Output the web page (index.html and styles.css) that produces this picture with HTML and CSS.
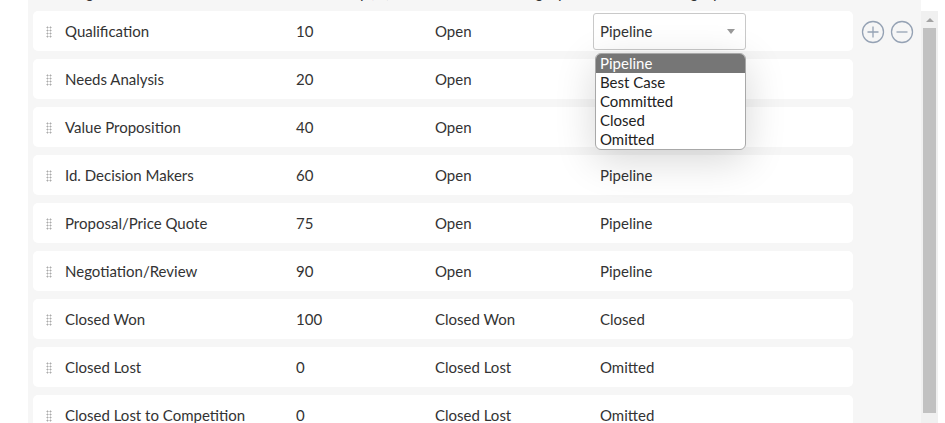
FILE: index.html
```html
<!DOCTYPE html>
<html lang="en">
<head>
    <meta charset="UTF-8">
    <meta name="viewport" content="width=device-width, initial-scale=1.0">
    <title>Opportunity Stages</title>
    <link rel="stylesheet" href="styles.css">
</head>
<body>

    <div class="page">
        <div class="strip"></div>

        <div class="panel">
            <div class="list">
                <div class="head">
                    <span class="name">Stage Name</span>
                    <span class="prob">Probability (%)</span>
                    <span class="status">Won/Lost Category</span>
                    <span class="cat">Forecast Category</span>
                </div>

                <div class="row">
                    <span class="handle"></span>
                    <span class="name">Qualification</span>
                    <span class="prob">10</span>
                    <span class="status">Open</span>
                    <div class="cat picker">
                        <div class="select">Pipeline <span class="caret"></span></div>
                        <ul class="options">
                            <li class="selected">Pipeline</li>
                            <li>Best Case</li>
                            <li>Committed</li>
                            <li>Closed</li>
                            <li>Omitted</li>
                        </ul>
                    </div>
                </div>
                <div class="row">
                    <span class="handle"></span>
                    <span class="name">Needs Analysis</span>
                    <span class="prob">20</span>
                    <span class="status">Open</span>
                    <span class="cat"></span>
                </div>
                <div class="row">
                    <span class="handle"></span>
                    <span class="name">Value Proposition</span>
                    <span class="prob">40</span>
                    <span class="status">Open</span>
                    <span class="cat"></span>
                </div>
                <div class="row">
                    <span class="handle"></span>
                    <span class="name">Id. Decision Makers</span>
                    <span class="prob">60</span>
                    <span class="status">Open</span>
                    <span class="cat">Pipeline</span>
                </div>
                <div class="row">
                    <span class="handle"></span>
                    <span class="name">Proposal/Price Quote</span>
                    <span class="prob">75</span>
                    <span class="status">Open</span>
                    <span class="cat">Pipeline</span>
                </div>
                <div class="row">
                    <span class="handle"></span>
                    <span class="name">Negotiation/Review</span>
                    <span class="prob">90</span>
                    <span class="status">Open</span>
                    <span class="cat">Pipeline</span>
                </div>
                <div class="row">
                    <span class="handle"></span>
                    <span class="name">Closed Won</span>
                    <span class="prob">100</span>
                    <span class="status">Closed Won</span>
                    <span class="cat">Closed</span>
                </div>
                <div class="row">
                    <span class="handle"></span>
                    <span class="name">Closed Lost</span>
                    <span class="prob">0</span>
                    <span class="status">Closed Lost</span>
                    <span class="cat">Omitted</span>
                </div>
                <div class="row">
                    <span class="handle"></span>
                    <span class="name">Closed Lost to Competition</span>
                    <span class="prob">0</span>
                    <span class="status">Closed Lost</span>
                    <span class="cat">Omitted</span>
                </div>
            </div>

            <div class="actions">
                <svg class="icon" width="24" height="24" viewBox="0 0 24 24">
                    <circle cx="12" cy="12" r="10.5"/>
                    <path d="M12 6.5v11M6.5 12h11"/>
                </svg>
                <svg class="icon" width="24" height="24" viewBox="0 0 24 24">
                    <circle cx="12" cy="12" r="10.5"/>
                    <path d="M6.5 12h11"/>
                </svg>
            </div>
        </div>

        <div class="scrollbar">
            <div class="arrow"></div>
            <div class="thumb"></div>
        </div>
        <div class="edge"></div>
    </div>

</body>
</html>
```

FILE: styles.css
```css
* { box-sizing: border-box; margin: 0; padding: 0; }
body { font-family: Lato, "Open Sans", sans-serif; font-size: 15px; color: #333; background: #fff; overflow: hidden; }

.page { display: flex; height: 423px; overflow: hidden; }
.strip { width: 28px; flex: none; }
.edge { width: 7px; flex: none; }

.panel {
    flex: 1;
    display: flex;
    align-items: flex-start;
    background: #f6f6f6;
    padding-left: 5px;
}

.list { width: 820px; flex: none; }

.head {
    display: flex;
    height: 18px;
    line-height: 18px;
    margin-top: -17px;
    margin-bottom: 10px;
    padding-left: 32px;
}

.row {
    display: flex;
    align-items: center;
    height: 40px;
    margin-bottom: 8px;
    padding-left: 13px;
    background: #fff;
    border-radius: 5px;
}

.handle {
    width: 6px;
    height: 12px;
    margin-right: 13px;
    margin-top: 1px;
    background-image: radial-gradient(circle, #aaa 0.9px, transparent 1.1px);
    background-size: 3px 3px;
    flex: none;
}

.name { width: 231px; flex: none; }
.prob { width: 139px; flex: none; }
.status { width: 158px; flex: none; }
.cat { padding-left: 7px; }

.picker { position: relative; padding-left: 0; }

.select {
    display: flex;
    align-items: center;
    justify-content: space-between;
    width: 153px;
    height: 37px;
    padding: 0 10px 0 6px;
    border: 1px solid #c9c9c9;
    border-radius: 3px;
    background: #fff;
}

.caret {
    width: 0;
    height: 0;
    border-left: 4px solid transparent;
    border-right: 4px solid transparent;
    border-top: 5px solid #999;
}

.options {
    position: absolute;
    top: 40px;
    left: 2px;
    width: 151px;
    list-style: none;
    background: #fff;
    border: 1px solid #a8a8a8;
    border-radius: 6px;
    overflow: hidden;
    box-shadow: 0 10px 40px rgba(0, 0, 0, 0.16);
    z-index: 2;
}

.options li { height: 19px; line-height: 18px; padding-left: 4px; color: #222; }
.options .selected { background: #767676; color: #fff; }

.actions { display: flex; gap: 5px; margin: 20px 0 0 8px; }
.icon { fill: none; stroke: #95a2b4; stroke-width: 1.3; }

.scrollbar {
    width: 17px;
    flex: none;
    margin-top: 11px;
    background: #f0f0f0;
    display: flex;
    flex-direction: column;
    align-items: center;
}

.arrow {
    width: 0;
    height: 0;
    margin: 7px 0 6px;
    border-left: 4px solid transparent;
    border-right: 4px solid transparent;
    border-bottom: 4px solid #a3a3a3;
}

.thumb { width: 13px; height: 385px; background: #c1c1c1; }
```
